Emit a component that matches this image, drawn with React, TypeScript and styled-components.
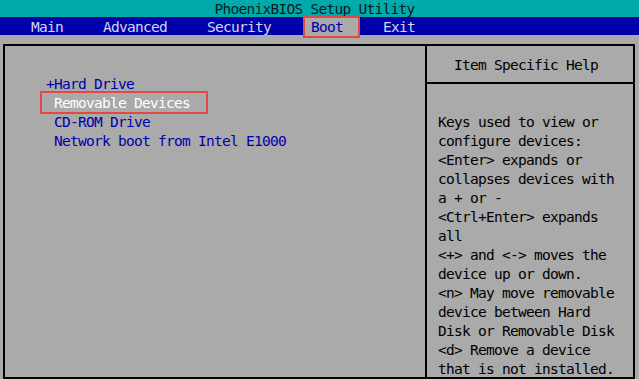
import styled, { createGlobalStyle } from "styled-components";

const GlobalStyle = createGlobalStyle`
  html, body {
    margin: 0;
    padding: 0;
    background: #aaaaaa;
    overflow: hidden;
  }
`

const Screen = styled.div`
  width: 639px;
  height: 379px;
  display: flex;
  flex-direction: column;
  background: #aaaaaa;
  overflow: hidden;
  font-family: "DejaVu Sans Mono", "Liberation Mono", monospace;
  font-size: 14.5px;
  letter-spacing: -0.73px;
`

const TitleBar = styled.div`
  height: 17px;
  line-height: 18px;
  background: #00aaaa;
  color: #0a1a1a;
  text-align: center;
  padding-right: 10px;
  white-space: pre;
`

const MenuBar = styled.div`
  height: 19px;
  display: flex;
  align-items: stretch;
  gap: 28px;
  padding-left: 25px;
  background: #0000aa;
`

const MenuItem = styled.div<{ $active?: boolean }>`
  position: relative;
  display: flex;
  align-items: center;
  padding: ${(p) => (p.$active ? "1px 15px 0 6px" : "1px 6px 0")};
  margin-right: ${(p) => (p.$active ? "-9px" : "0")};
  background: ${(p) => (p.$active ? "#aaaaaa" : "transparent")};
  color: ${(p) => (p.$active ? "#0000aa" : "#d4d4f4")};

  ${(p) =>
    p.$active &&
    `
    &::after {
      content: "";
      position: absolute;
      left: -2px;
      right: -2px;
      top: -1px;
      bottom: -3px;
      border: 2px solid #e04a44;
    }
  `}
`

const Frame = styled.div`
  margin: 9px 0 0 3px;
  width: 632px;
  height: 340px;
  box-sizing: border-box;
  border: 2px solid #000;
  display: grid;
  grid-template-columns: 1fr 206px;
`

const ListPanel = styled.div`
  border-right: 2px solid #000;
  padding: 28px 0 0 37px;
  display: flex;
  flex-direction: column;
  align-items: flex-start;
`

const BootItem = styled.div<{ $selected?: boolean }>`
  height: 19px;
  line-height: 21px;
  padding: ${(p) => (p.$selected ? "0 16px 0 4px" : "0 4px")};
  white-space: pre;
  color: ${(p) => (p.$selected ? "#ffffff" : "#0000aa")};
  outline: ${(p) => (p.$selected ? "2px solid #e04a44" : "none")};
`

const HelpPanel = styled.div`
  display: flex;
  flex-direction: column;
`

const HelpHeader = styled.div`
  height: 36px;
  line-height: 38px;
  border-bottom: 2px solid #000;
  text-align: center;
  padding-right: 8px;
  color: #000;
`

const HelpBody = styled.div`
  padding: 27px 0 0 11px;
  color: #000;
`

const HelpLine = styled.div`
  height: 19px;
  line-height: 23px;
  white-space: pre;
`

const menu = ["Main", "Advanced", "Security", "Boot", "Exit"]

const devices = [
  "+Hard Drive",
  " Removable Devices",
  " CD-ROM Drive",
  " Network boot from Intel E1000",
]

const help = [
  "Keys used to view or",
  "configure devices:",
  "<Enter> expands or",
  "collapses devices with",
  "a + or -",
  "<Ctrl+Enter> expands",
  "all",
  "<+> and <-> moves the",
  "device up or down.",
  "<n> May move removable",
  "device between Hard",
  "Disk or Removable Disk",
  "<d> Remove a device",
  "that is not installed.",
]

export default function App() {
  return (
    <>
      <GlobalStyle />
      <Screen>
        <TitleBar>PhoenixBIOS Setup Utility</TitleBar>
        <MenuBar>
          {menu.map((m) => (
            <MenuItem key={m} $active={m === "Boot"}>
              {m}
            </MenuItem>
          ))}
        </MenuBar>
        <Frame>
          <ListPanel>
            {devices.map((d, i) => (
              <BootItem key={d} $selected={i === 1}>
                {d}
              </BootItem>
            ))}
          </ListPanel>
          <HelpPanel>
            <HelpHeader>Item Specific Help</HelpHeader>
            <HelpBody>
              {help.map((h) => (
                <HelpLine key={h}>{h}</HelpLine>
              ))}
            </HelpBody>
          </HelpPanel>
        </Frame>
      </Screen>
    </>
  )
}
